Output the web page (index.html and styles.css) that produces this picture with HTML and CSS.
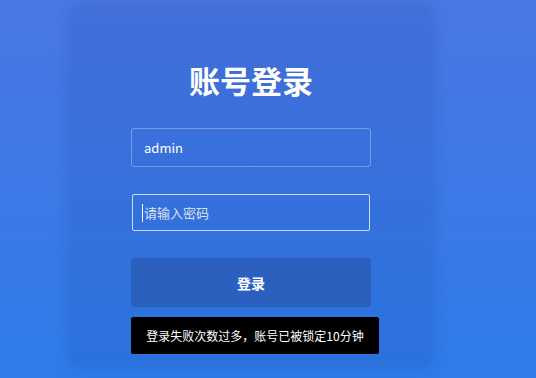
FILE: index.html
```html
<!DOCTYPE html>
<html lang="zh-CN">
<head>
    <meta charset="UTF-8">
    <meta name="viewport" content="width=device-width, initial-scale=1.0">
    <title>账号登录</title>
    <link rel="stylesheet" href="styles.css">
</head>
<body>
    <div class="login-box">
        <h1>账号登录</h1>
        <form class="login-form">
            <div class="form-group">
                <input type="text" class="form-control" value="admin">
            </div>
            <div class="form-group focused">
                <span class="caret"></span>
                <input type="password" class="form-control" placeholder="请输入密码">
            </div>
            <button type="submit" class="btn">登录</button>
        </form>
        <div class="toast">登录失败次数过多，账号已被锁定10分钟</div>
    </div>
</body>
</html>
```

FILE: styles.css
```css
* {
    margin: 0;
    padding: 0;
    box-sizing: border-box;
    font-family: "Noto Sans CJK SC", "Noto Sans", sans-serif;
}

body {
    background: linear-gradient(to bottom, #4a77e3, #2e7cea);
    min-height: 100vh;
    padding-top: 7px;
}

.login-box {
    position: relative;
    width: 360px;
    margin-left: 71px;
    padding: 53px 60px 59px;
    background: rgba(20, 50, 140, 0.12);
    border-radius: 5px;
    box-shadow: 0 0 18px rgba(20, 40, 110, 0.18);
}

h1 {
    color: #fff;
    font-size: 31px;
    line-height: 40px;
    font-weight: 700;
    text-align: center;
    margin-bottom: 28px;
}

.form-group {
    position: relative;
    margin-bottom: 27px;
}

.form-control {
    display: block;
    width: 100%;
    height: 39px;
    padding: 0 12px;
    background: transparent;
    border: 1px solid rgba(255, 255, 255, 0.3);
    border-radius: 3px;
    color: #fff;
    font-size: 13px;
    outline: none;
}

.focused {
    padding: 0 1px;
}

.focused .form-control {
    height: 37px;
    padding: 0 11px;
    border: 1px solid rgba(255, 255, 255, 0.75);
    border-radius: 2px;
}

.form-control::placeholder {
    color: #dbe2ef;
}

.caret {
    position: absolute;
    left: 11px;
    top: 10px;
    width: 1px;
    height: 18px;
    background: #fff;
}

.btn {
    display: block;
    width: 100%;
    height: 49px;
    background-color: #2c60bf;
    color: #fff;
    border: none;
    border-radius: 3px;
    font-size: 14px;
    font-weight: 700;
    cursor: pointer;
}

.toast {
    position: absolute;
    left: 60px;
    top: 310px;
    width: 248px;
    height: 37px;
    line-height: 37px;
    background: #000;
    color: #fff;
    font-size: 12px;
    text-align: center;
    border-radius: 2px;
}
```
